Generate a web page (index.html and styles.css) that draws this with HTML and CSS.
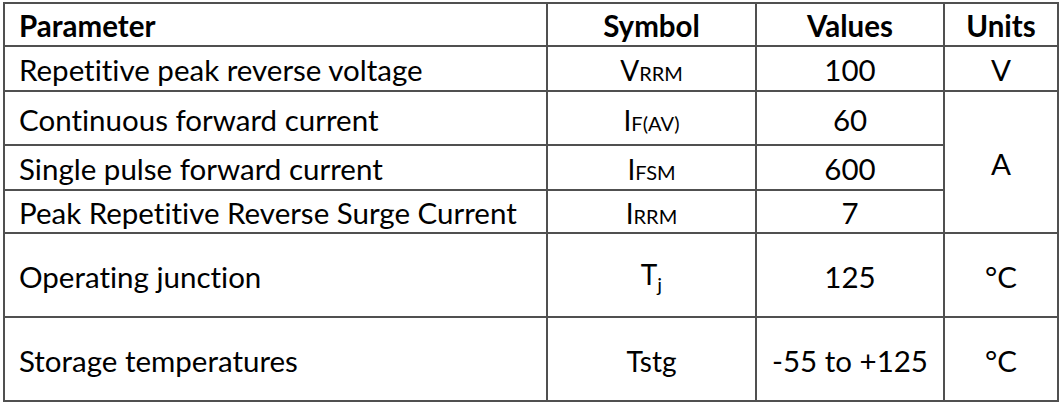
FILE: index.html
```html
<!DOCTYPE html>
<html>
<head>
<meta charset="utf-8">
<link rel="stylesheet" href="styles.css">
</head>
<body>
<table class="spec">
  <colgroup>
    <col class="c-param">
    <col class="c-sym">
    <col class="c-val">
    <col class="c-unit">
  </colgroup>
  <tr class="r-head">
    <th class="param">Parameter</th>
    <th>Symbol</th>
    <th>Values</th>
    <th>Units</th>
  </tr>
  <tr class="r1">
    <td class="param">Repetitive peak reverse voltage</td>
    <td class="sym">V<span class="sc">RRM</span></td>
    <td>100</td>
    <td>V</td>
  </tr>
  <tr class="r2">
    <td class="param">Continuous forward current</td>
    <td class="sym">I<span class="sc">F(AV)</span></td>
    <td>60</td>
    <td rowspan="3" class="unit-a">A</td>
  </tr>
  <tr class="r3">
    <td class="param">Single pulse forward current</td>
    <td class="sym">I<span class="sc">FSM</span></td>
    <td>600</td>
  </tr>
  <tr class="r4">
    <td class="param">Peak Repetitive Reverse Surge Current</td>
    <td class="sym">I<span class="sc">RRM</span></td>
    <td>7</td>
  </tr>
  <tr class="r5">
    <td class="param">Operating junction</td>
    <td class="sym">T<span class="sub">j</span></td>
    <td>125</td>
    <td class="deg">°C</td>
  </tr>
  <tr class="r6">
    <td class="param">Storage temperatures</td>
    <td class="sym">Tstg</td>
    <td>-55 to +125</td>
    <td class="deg">°C</td>
  </tr>
</table>
</body>
</html>
```

FILE: styles.css
```css
html, body {
  margin: 0;
  padding: 0;
  background: #ffffff;
}

body {
  padding: 2px 0 0 3px;
}

.spec {
  border-collapse: collapse;
  table-layout: fixed;
  width: 1055px;
  font-family: Lato, "Liberation Sans", sans-serif;
  font-size: 29.5px;
  font-variant-ligatures: none;
  color: #000;
}

.c-param { width: 543px; }
.c-sym { width: 209px; }
.c-val { width: 188px; }
.c-unit { width: 114px; }

.spec th,
.spec td {
  border: 2px solid #505050;
  text-align: center;
  vertical-align: middle;
  padding: 3px 0 0 0;
  line-height: 1;
}

.spec th {
  font-weight: 700;
}

.spec .param {
  text-align: left;
  padding-left: 14px;
}

.r-head { height: 43px; }
.r1 { height: 45px; }
.r2 { height: 54px; }
.r3 { height: 45px; }
.r4 { height: 43px; }
.r5 { height: 84px; }
.r6 { height: 84px; }

.sym {
  font-size: 28px;
}

.sc {
  font-size: 20px;
}

.sub {
  font-size: 20px;
  vertical-align: -7px;
}

.deg {
  padding-top: 10px;
}

.unit-a {
  padding-bottom: 2px;
}
```
